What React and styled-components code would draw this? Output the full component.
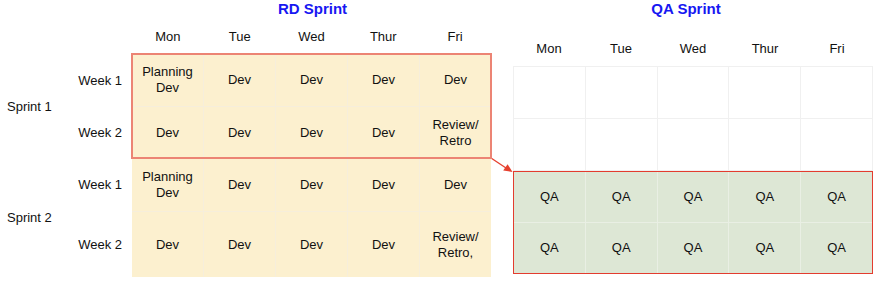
import React from 'react'
import styled, { createGlobalStyle } from 'styled-components'

const days = ["Mon", "Tue", "Wed", "Thur", "Fri"]

const rdSprints = [
  {
    name: "Sprint 1",
    rows: "52px 51px",
    highlight: true,
    weeks: [
      ["Planning\nDev", "Dev", "Dev", "Dev", "Dev"],
      ["Dev", "Dev", "Dev", "Dev", "Review/\nRetro"],
    ],
  },
  {
    name: "Sprint 2",
    rows: "53px 65px",
    highlight: false,
    weeks: [
      ["Planning\nDev", "Dev", "Dev", "Dev", "Dev"],
      ["Dev", "Dev", "Dev", "Dev", "Review/\nRetro,"],
    ],
  },
]

const GlobalStyle = createGlobalStyle`
  body {
    margin: 0;
    background: #fff;
    font-family: "Liberation Sans", Arial, sans-serif;
    font-size: 13px;
    color: #111;
  }
`

const Page = styled.div`
  position: relative;
  width: 884px;
  height: 283px;
  display: flex;
  gap: 22px;
`

const RdSide = styled.div`
  display: flex;
  flex-direction: column;
  width: 491px;
`

const QaSide = styled.div`
  display: flex;
  flex-direction: column;
  width: 360px;
`

const Title = styled.div`
  height: 22px;
  line-height: 18px;
  font-size: 15px;
  font-weight: bold;
  color: #1717f2;
  text-align: center;
  padding-left: ${p => p.$shiftLeft || 0}px;
  padding-right: ${p => p.$shiftRight || 0}px;
`

const HeadRow = styled.div`
  display: grid;
  grid-template-columns: repeat(5, 1fr);
  height: ${p => p.$h}px;
  margin-left: ${p => p.$indent || 0}px;
`

const DayHead = styled.div`
  align-self: end;
  text-align: center;
  line-height: 16px;
  padding-bottom: 9px;
`

const Group = styled.div`
  display: grid;
  grid-template-columns: 60px 72px 359px;
  grid-template-rows: ${p => p.$rows};
  row-gap: 1px;
`

const SprintLabel = styled.div`
  grid-column: 1;
  grid-row: 1 / 3;
  align-self: center;
  padding-left: 7px;
`

const WeekLabel = styled.div`
  grid-column: 2;
  grid-row: ${p => p.$row};
  align-self: center;
  text-align: right;
  padding-right: 10px;
`

const CellGrid = styled.div`
  grid-column: 3;
  grid-row: 1 / 3;
  display: grid;
  grid-template-columns: repeat(5, 1fr);
  grid-template-rows: ${p => p.$rows};
  gap: 1px;
  background: #f6eedb;
  ${p => p.$highlight && `
    position: relative;
    z-index: 1;
    outline: 2px solid #ec8474;
    outline-offset: -1px;
  `}
`

const QaGrid = styled.div`
  display: grid;
  grid-template-columns: repeat(5, 1fr);
  grid-template-rows: ${p => p.$rows};
  gap: 1px;
  background: ${p => p.$line};
  border: 1px solid ${p => p.$frame};
`

const Cell = styled.div`
  display: flex;
  align-items: center;
  justify-content: center;
  text-align: center;
  line-height: 16px;
  white-space: pre-line;
  background: ${p => p.$bg};
`

const Connector = styled.svg`
  position: absolute;
  left: 486px;
  top: 153px;
  overflow: visible;
`

export default function App() {
  return (
    <>
      <GlobalStyle />
      <Page>
        <RdSide>
          <Title $shiftLeft={134}>RD Sprint</Title>
          <HeadRow $h={32} $indent={132}>
            {days.map(d => <DayHead key={d}>{d}</DayHead>)}
          </HeadRow>
          {rdSprints.map(s => (
            <Group key={s.name} $rows={s.rows}>
              <SprintLabel>{s.name}</SprintLabel>
              <WeekLabel $row={1}>Week 1</WeekLabel>
              <WeekLabel $row={2}>Week 2</WeekLabel>
              <CellGrid $rows={s.rows} $highlight={s.highlight}>
                {s.weeks.flat().map((t, i) => (
                  <Cell key={i} $bg="#fcf0cf">{t}</Cell>
                ))}
              </CellGrid>
            </Group>
          ))}
        </RdSide>

        <QaSide>
          <Title $shiftRight={14}>QA Sprint</Title>
          <HeadRow $h={44}>
            {days.map(d => <DayHead key={d}>{d}</DayHead>)}
          </HeadRow>
          <QaGrid $rows="51px 51px" $line="#f0f0f0" $frame="#f0f0f0">
            {Array.from({ length: 10 }).map((_, i) => (
              <Cell key={i} $bg="#fff" />
            ))}
          </QaGrid>
          <QaGrid $rows="50px 50px" $line="#e9efe4" $frame="#e33c2f">
            {Array.from({ length: 10 }).map((_, i) => (
              <Cell key={i} $bg="#dde7d5">QA</Cell>
            ))}
          </QaGrid>
        </QaSide>

        <Connector width="30" height="22" viewBox="486 153 30 22">
          <line x1="491" y1="158" x2="506" y2="168" stroke="#e6412f" strokeWidth="1.3" />
          <polygon points="512.5,172 503.2,170.6 507.6,164.2" fill="#e6412f" />
        </Connector>
      </Page>
    </>
  )
}
